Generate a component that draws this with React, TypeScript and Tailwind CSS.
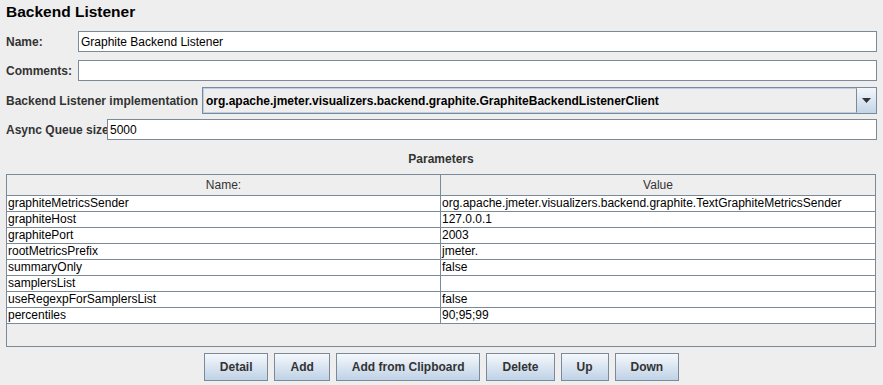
import React from 'react';

const params: [string, string][] = [
	['graphiteMetricsSender', 'org.apache.jmeter.visualizers.backend.graphite.TextGraphiteMetricsSender'],
	['graphiteHost', '127.0.0.1'],
	['graphitePort', '2003'],
	['rootMetricsPrefix', 'jmeter.'],
	['summaryOnly', 'false'],
	['samplersList', ''],
	['useRegexpForSamplersList', 'false'],
	['percentiles', '90;95;99'],
];

const buttons = ['Detail', 'Add', 'Add from Clipboard', 'Delete', 'Up', 'Down'];

const TextField = ({ value = '' }: { value?: string }) => (
	<div className="flex-1 h-[21px] border border-[#7a8a99] bg-white pl-[2px] flex items-center text-[12px] text-black">
		{value}
	</div>
);

export default function App() {
	return (
		<div className="w-[883px] h-[385px] bg-[#eeeeee] font-['Liberation_Sans',Arial,sans-serif] text-[#333333] px-[6px] flex flex-col overflow-hidden">
			{/* Title */}
			<div className="h-[25px] pt-[3px] text-[15.5px] font-bold text-black leading-[18px]">Backend Listener</div>

			{/* Name / Comments */}
			<div className="flex items-center mt-[6px]">
				<span className="w-[72px] shrink-0 text-[12px] font-bold">Name:</span>
				<TextField value="Graphite Backend Listener" />
			</div>
			<div className="flex items-center mt-[8px]">
				<span className="w-[72px] shrink-0 text-[12px] font-bold">Comments:</span>
				<TextField />
			</div>

			{/* Implementation combo */}
			<div className="flex items-center mt-[6px]">
				<span className="w-[196px] shrink-0 whitespace-nowrap text-[12px] font-bold">Backend Listener implementation</span>
				<div className="flex-1 h-[27px] border border-[#7a8a99] flex">
					<div className="flex-1 bg-[#eeeeee] border border-[#b8cfe5] border-r-[#7a8a99] flex items-center pl-[2px] text-[12px] font-bold text-black">
						org.apache.jmeter.visualizers.backend.graphite.GraphiteBackendListenerClient
					</div>
					<div className="w-[19px] bg-gradient-to-b from-[#f3f7fb] to-[#c3d5e8] flex items-center justify-center">
						<svg width="9" height="5" viewBox="0 0 9 5">
							<path d="M0 0h9L4.5 5z" fill="#333" />
						</svg>
					</div>
				</div>
			</div>

			{/* Async queue */}
			<div className="flex items-center mt-[5px]">
				<span className="w-[101px] shrink-0 whitespace-nowrap text-[12px] font-bold">Async Queue size</span>
				<TextField value="5000" />
			</div>

			{/* Parameters */}
			<div className="mt-[11px] h-[16px] text-center text-[12px] font-bold leading-[16px] pr-[1px]">Parameters</div>

			<div className="mt-[7px] mr-[1px] h-[173px] border border-[#7a8a99] flex flex-col text-[12px] text-black">
				<div className="flex h-[21px] border-b border-[#7a8a99] bg-[#eeeeee] text-[#333333]">
					<div className="w-[434px] border-r border-[#7a8a99] flex items-center justify-center">Name:</div>
					<div className="flex-1 flex items-center justify-center">Value</div>
				</div>
				{params.map(([name, value]) => (
					<div key={name} className="flex h-[16px] border-b border-[#7a8a99] bg-white leading-[15px]">
						<div className="w-[434px] border-r border-[#7a8a99] pl-[1px] whitespace-nowrap overflow-hidden">{name}</div>
						<div className="flex-1 pl-[1px] whitespace-nowrap overflow-hidden">{value}</div>
					</div>
				))}
				<div className="flex-1 bg-[#eeeeee]" />
			</div>

			{/* Buttons */}
			<div className="mt-[6px] flex justify-center gap-[6px]">
				{buttons.map((b) => (
					<button
						key={b}
						className="h-[28px] px-[15px] border border-[#7a8a99] bg-gradient-to-b from-[#f5f8fc] to-[#bfd2e6] text-[12px] font-bold text-[#333333]"
					>
						{b}
					</button>
				))}
			</div>
		</div>
	);
}
